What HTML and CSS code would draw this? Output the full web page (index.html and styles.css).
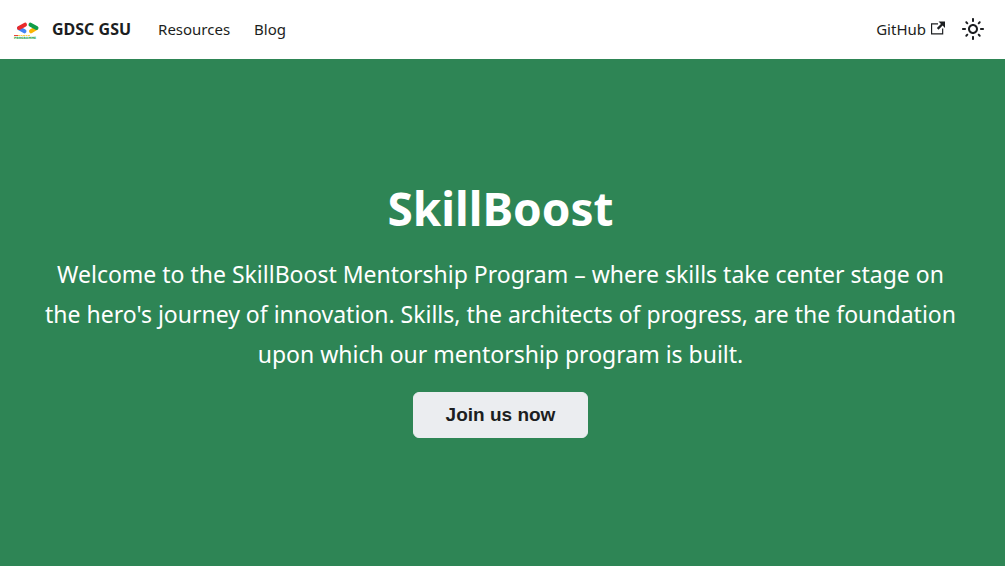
FILE: index.html
```html
<!DOCTYPE html>
<html lang="en">
<head>
<meta charset="utf-8">
<meta name="viewport" content="width=device-width, initial-scale=1">
<title>GDSC GSU</title>
<link rel="stylesheet" href="styles.css">
</head>
<body>
<nav class="navbar" aria-label="Main">
  <a class="brand" href="#">
    <svg class="logo" viewBox="0 0 32 32" aria-hidden="true">
      <g fill="none" stroke-width="4" stroke-linecap="round">
        <path stroke="#4285f4" d="M9 15.200L14.500 18.300"/>
        <path stroke="#ea2b2b" d="M9 15L15 11.700"/>
        <path stroke="#fbb404" d="M26 15.200L21 18.300"/>
        <path stroke="#0f9d48" d="M20.500 11.700L26.500 15"/>
      </g>
      <path stroke="#ea4335" d="M4 22.500H8"/>
      <path stroke="#fbbc04" stroke-opacity=".7" stroke-dasharray="2 .5" d="M8 22.500H20"/>
      <text class="logo-text" x="4" y="26">PROGRAMME</text>
    </svg>
    <b>GDSC GSU</b>
  </a>
  <a class="nav-link" href="#">Resources</a>
  <a class="nav-link" href="#">Blog</a>
  <div class="nav-right">
    <a class="nav-link" href="#">GitHub<svg class="external" viewBox="0 0 24 24" aria-hidden="true"><path fill="currentColor" d="M21 13v10h-21v-19h12v2h-10v15h17v-8h2zm3-12h-10.988l4.035 4-6.977 7.070 2.828 2.828 6.977-7.070 4.125 4.172v-11z"/></svg></a>
    <button class="theme" type="button" aria-label="Switch theme"><svg viewBox="0 0 24 24" width="24" height="24"><path fill="currentColor" d="M12,9c1.650,0,3,1.350,3,3s-1.350,3-3,3s-3-1.350-3-3S10.350,9,12,9 M12,7c-2.760,0-5,2.240-5,5s2.240,5,5,5s5-2.240,5-5 S14.760,7,12,7L12,7z M2,13l2,0c0.550,0,1-0.450,1-1s-0.450-1-1-1l-2,0c-0.550,0-1,0.450-1,1S1.450,13,2,13z M20,13l2,0c0.550,0,1-0.450,1-1 s-0.450-1-1-1l-2,0c-0.550,0-1,0.450-1,1S19.450,13,20,13z M11,2v2c0,0.550,0.450,1,1,1s1-0.450,1-1V2c0-0.550-0.450-1-1-1S11,1.450,11,2z M11,20v2c0,0.550,0.450,1,1,1s1-0.450,1-1v-2c0-0.550-0.450-1-1-1C11.450,19,11,19.450,11,20z M5.990,4.580c-0.390-0.390-1.030-0.390-1.410,0 c-0.390,0.390-0.390,1.030,0,1.410l1.060,1.060c0.390,0.390,1.030,0.390,1.410,0s0.390-1.030,0-1.410L5.990,4.580z M18.360,16.950 c-0.390-0.390-1.030-0.390-1.410,0c-0.390,0.390-0.390,1.030,0,1.410l1.060,1.060c0.390,0.390,1.030,0.390,1.410,0c0.390-0.390,0.390-1.030,0-1.410 L18.360,16.950z M19.420,5.990c0.390-0.390,0.390-1.030,0-1.410c-0.390-0.390-1.030-0.390-1.410,0l-1.060,1.060c-0.390,0.390-0.390,1.030,0,1.410 s1.030,0.390,1.410,0L19.420,5.990z M7.050,18.360c0.390-0.390,0.390-1.030,0-1.410c-0.390-0.390-1.030-0.390-1.410,0l-1.060,1.060 c-0.390,0.390-0.390,1.030,0,1.410s1.030,0.390,1.410,0L7.050,18.360z"/></svg></button>
  </div>
</nav>
<header class="hero">
  <h1>SkillBoost</h1>
  <p>Welcome to the SkillBoost Mentorship Program – where skills take center stage on the hero's journey of innovation. Skills, the architects of progress, are the foundation upon which our mentorship program is built.</p>
  <button class="join" type="button">Join us now</button>
</header>
</body>
</html>
```
FILE: styles.css
```css
* { box-sizing: border-box; }
body {
  margin: 0;
  min-height: 100vh;
  display: flex;
  flex-direction: column;
  font: 15px/26px "Noto Sans", sans-serif;
  color: #1c1e21;
}
a { color: inherit; text-decoration: none; }
.navbar {
  display: flex;
  align-items: center;
  padding: 12px 16px 13px 10px;
  background: #fff;
}
.brand { display: flex; align-items: center; gap: 10px; margin-right: 15px; }
.brand b { font-size: 16px; }
.logo { width: 32px; height: 32px; }
.logo-text { font: bold 3px "DejaVu Sans", sans-serif; fill: #0f9d48; }
.nav-link { padding: 4px 12px; }
.nav-right { display: flex; align-items: center; margin-left: auto; }
.external { width: 14px; height: 14px; margin-left: 5px; }
.theme {
  display: flex;
  align-items: center;
  justify-content: center;
  width: 32px;
  height: 32px;
  padding: 0;
  border: 0;
  border-radius: 50%;
  background: none;
  color: inherit;
}
.hero {
  flex: 1;
  display: flex;
  flex-direction: column;
  align-items: center;
  justify-content: center;
  padding: 0 48px 10px 44px;
  background: #2e8555;
  color: #fff;
  text-align: center;
}
.hero h1 { margin: 0 0 16px; font-size: 46px; line-height: 60px; }
.hero p { margin: 0 0 18px; font-size: 23px; line-height: 40px; }
.join {
  padding: 11px 32px;
  border: 1px solid #ebedf0;
  border-radius: 6px;
  background: #ebedf0;
  color: #1c1e21;
  font: bold 19px/22px "Liberation Sans", sans-serif;
}
```
